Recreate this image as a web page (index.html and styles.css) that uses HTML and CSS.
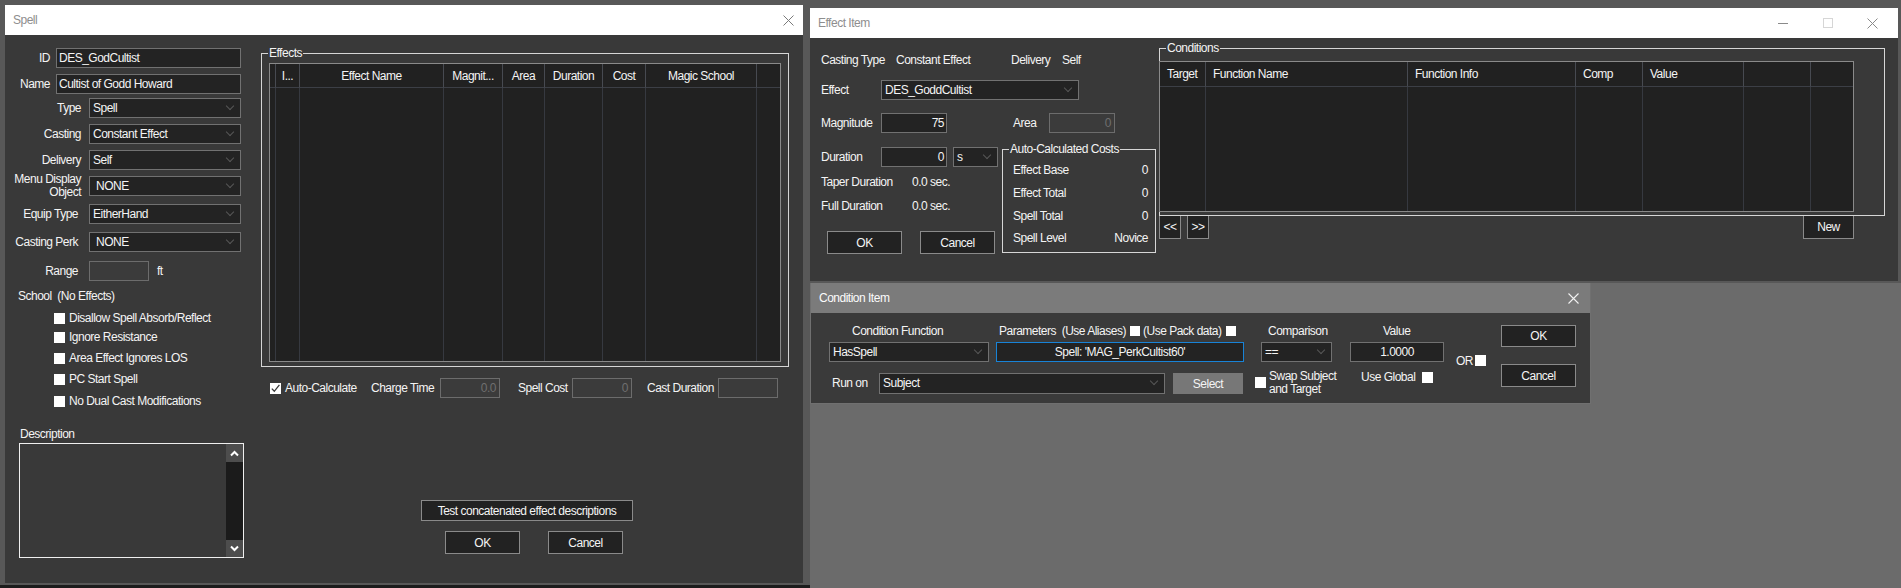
FILE: index.html
```html
<!DOCTYPE html>
<html>
<head>
<meta charset="utf-8">
<title>Spell</title>
<link rel="stylesheet" href="styles.css">
</head>
<body>

<div class="frame frame-spell">
  <div class="win">
    <div class="tbar">
      <span class="ttl">Spell</span>
      <span class="tb tb-spell"><svg width="11" height="11" viewBox="0 0 11 11"><path d="M0.5 0.5L10.5 10.5M10.5 0.5L0.5 10.5" stroke="#7a7a7a" stroke-width="1" fill="none"/></svg></span>
    </div>
    <div class="spell-body">
      <div class="spell-left">
        <div class="frow mt13"><span class="lbl la">ID</span><div class="inp wa">DES_GodCultist</div></div>
        <div class="frow mt6"><span class="lbl la">Name</span><div class="inp wa">Cultist of Godd Howard</div></div>
        <div class="frow mt4"><span class="lbl lb">Type</span><div class="inp dd wb">Spell</div></div>
        <div class="frow mt6"><span class="lbl lb">Casting</span><div class="inp dd wb">Constant Effect</div></div>
        <div class="frow mt6"><span class="lbl lb">Delivery</span><div class="inp dd wb">Self</div></div>
        <div class="frow mt6"><span class="lbl lb two">Menu Display<br>Object</span><div class="inp dd wb pad6">NONE</div></div>
        <div class="frow mt8"><span class="lbl lb lp3">Equip Type</span><div class="inp dd wb">EitherHand</div></div>
        <div class="frow mt8"><span class="lbl lb lp3">Casting Perk</span><div class="inp dd wb pad6">NONE</div></div>
        <div class="frow mt9"><span class="lbl lb lp3">Range</span><div class="inp dis wr"></div><span class="ft">ft</span></div>
        <div class="school">School&nbsp;&nbsp;(No Effects)</div>
        <div class="chk mt6"><span class="cb"></span>Disallow Spell Absorb/Reflect</div>
        <div class="chk mt3"><span class="cb"></span>Ignore Resistance</div>
        <div class="chk mt5"><span class="cb"></span>Area Effect Ignores LOS</div>
        <div class="chk mt5"><span class="cb"></span>PC Start Spell</div>
        <div class="chk mt6"><span class="cb"></span>No Dual Cast Modifications</div>
        <div class="desc-lbl">Description</div>
        <div class="desc">
          <div class="sb">
            <div class="sb-btn sb-up"><svg width="9" height="7" viewBox="0 0 9 7"><polyline points="1,5.5 4.5,2 8,5.5" stroke="#fff" stroke-width="2" fill="none"/></svg></div>
            <div class="sb-track"></div>
            <div class="sb-btn sb-dn"><svg width="9" height="7" viewBox="0 0 9 7"><polyline points="1,1.5 4.5,5 8,1.5" stroke="#fff" stroke-width="2" fill="none"/></svg></div>
          </div>
        </div>
      </div>

      <div class="spell-right">
        <div class="gb gb-eff">
          <span class="gb-t">Effects</span>
          <div class="lv lv-eff">
            <div class="h"></div>
            <div class="h">I...</div>
            <div class="h">Effect Name</div>
            <div class="h">Magnit...</div>
            <div class="h">Area</div>
            <div class="h">Duration</div>
            <div class="h">Cost</div>
            <div class="h">Magic School</div>
            <div class="h last"></div>
            <div class="b"></div><div class="b"></div><div class="b"></div><div class="b"></div><div class="b"></div><div class="b"></div><div class="b"></div><div class="b"></div><div class="b last"></div>
          </div>
        </div>

        <div class="autorow">
          <span class="cb cbk"><svg width="11" height="11" viewBox="0 0 11 11"><polyline points="1.8,5.6 4.3,8.3 9.4,1.8" stroke="#3a3a3a" stroke-width="1.3" fill="none"/></svg></span>
          <span class="a-lbl w86">Auto-Calculate</span>
          <span class="a-lbl w69">Charge Time</span>
          <div class="inp dis w60">0.0</div>
          <span class="a-lbl w54 ml18">Spell Cost</span>
          <div class="inp dis w60">0</div>
          <span class="a-lbl w71 ml15">Cast Duration</span>
          <div class="inp dis w60"></div>
        </div>

        <div class="btn btn-test">Test concatenated effect descriptions</div>
        <div class="btnrow">
          <div class="btn btn-ok1">OK</div>
          <div class="btn btn-cancel1">Cancel</div>
        </div>
      </div>
    </div>
  </div>
</div>

<div class="frame frame-effect">
  <div class="win">
    <div class="tbar tbar-eff">
      <span class="ttl">Effect Item</span>
      <span class="tb"><svg width="10" height="10" viewBox="0 0 10 10"><path d="M0 5.5H10" stroke="#8a8a8a" stroke-width="1"/></svg></span>
      <span class="tb"><svg width="10" height="10" viewBox="0 0 10 10"><rect x="0.5" y="0.5" width="9" height="9" stroke="#d6d6d6" stroke-width="1" fill="none"/></svg></span>
      <span class="tb"><svg width="11" height="11" viewBox="0 0 11 11"><path d="M0.5 0.5L10.5 10.5M10.5 0.5L0.5 10.5" stroke="#8a8a8a" stroke-width="1" fill="none"/></svg></span>
    </div>
    <div class="eff-body">
      <div class="eff-left">
        <div class="e-r1">
          <span class="w75">Casting Type</span>
          <span class="w115">Constant Effect</span>
          <span class="w51">Delivery</span>
          <span>Self</span>
        </div>
        <div class="frow e-r2"><span class="w60">Effect</span><div class="inp dd w198">DES_GoddCultist</div></div>
        <div class="frow e-r3">
          <span class="w60">Magnitude</span><div class="inp num w66">75</div>
          <span class="w36 ml66">Area</span><div class="inp dis w66">0</div>
        </div>
        <div class="e-low">
          <div class="e-sub">
            <div class="frow">
              <span class="w60">Duration</span><div class="inp num w66">0</div>
              <div class="inp dd w45 ml6">s</div>
            </div>
            <div class="srow mt7"><span class="w91">Taper Duration</span><span>0.0 sec.</span></div>
            <div class="srow mt8"><span class="w91">Full Duration</span><span>0.0 sec.</span></div>
            <div class="btnrow mt17">
              <div class="btn btn-ok2">OK</div>
              <div class="btn btn-cancel2">Cancel</div>
            </div>
          </div>
          <div class="gb gb-cost">
            <span class="gb-t">Auto-Calculated Costs</span>
            <div class="crow"><span>Effect Base</span><span>0</span></div>
            <div class="crow mt7"><span>Effect Total</span><span>0</span></div>
            <div class="crow mt7"><span>Spell Total</span><span>0</span></div>
            <div class="crow mt6"><span>Spell Level</span><span>Novice</span></div>
          </div>
        </div>
      </div>

      <div class="cond-panel">
        <div class="gb gb-cond">
          <span class="gb-t">Conditions</span>
          <div class="lv lv-cond">
            <div class="h">Target</div>
            <div class="h">Function Name</div>
            <div class="h">Function Info</div>
            <div class="h">Comp</div>
            <div class="h">Value</div>
            <div class="h"></div>
            <div class="h last"></div>
            <div class="b"></div><div class="b"></div><div class="b"></div><div class="b"></div><div class="b"></div><div class="b"></div><div class="b last"></div>
          </div>
        </div>
        <div class="cbtns">
          <div class="btn btn-sm">&lt;&lt;</div>
          <div class="btn btn-sm ml6">&gt;&gt;</div>
          <div class="btn btn-new">New</div>
        </div>
      </div>
    </div>
  </div>
</div>

<div class="cond">
  <div class="ctbar">
    <span class="ttl ttl-c">Condition Item</span>
    <span class="tb tb-c"><svg width="11" height="11" viewBox="0 0 11 11"><path d="M0.5 0.5L10.5 10.5M10.5 0.5L0.5 10.5" stroke="#f2f2f2" stroke-width="1.1" fill="none"/></svg></span>
  </div>
  <div class="cbody">
    <div class="cmain">
      <div class="ca">
        <span class="w147">Condition Function</span>
        <span class="w128">Parameters&nbsp;&nbsp;(Use Aliases)</span>
        <span class="cb cb10 ml3"></span>
        <span class="w80 ml3">(Use Pack data)</span>
        <span class="cb cb10 ml3"></span>
        <span class="w115 ml32">Comparison</span>
        <span>Value</span>
      </div>
      <div class="frow cbrow">
        <div class="inp dd w160 ml18">HasSpell</div>
        <div class="inp param w248 ml7">Spell: 'MAG_PerkCultist60'</div>
        <div class="inp dd w71 ml17">==</div>
        <div class="inp val w94 ml18">1.0000</div>
        <div class="orgrp"><span class="w19">OR</span><span class="cb"></span></div>
      </div>
      <div class="ccrow">
        <span class="runon">Run on</span>
        <div class="inp dd w286 h21">Subject</div>
        <div class="btn btn-sel">Select</div>
        <span class="cb swapcb"></span>
        <span class="swaptxt">Swap Subject<br>and Target</span>
        <span class="useglobal">Use Global</span>
        <span class="cb globalcb"></span>
      </div>
    </div>
    <div class="cbcol">
      <div class="btn btn-c">OK</div>
      <div class="btn btn-c btn-c2">Cancel</div>
    </div>
  </div>
</div>

</body>
</html>
```
FILE: styles.css
```css
* { box-sizing: border-box; }
html, body { margin: 0; padding: 0; }
body {
  position: relative;
  width: 1901px;
  height: 588px;
  overflow: hidden;
  background: #6b6b6b;
  font-family: "Liberation Sans", Arial, sans-serif;
  font-size: 12px;
  letter-spacing: -0.5px;
  line-height: 16px;
  color: #f4f4f4;
}

/* window frames on the desktop */
.frame { position: absolute; background: #585858; }
.frame-spell {
  left: 0; top: 0; width: 810px; height: 588px;
  padding: 5px 7px 2px 5px;
  border-bottom: 3px solid #1c1c1c;
}
.frame-effect {
  left: 810px; top: 0; width: 1091px; height: 283px;
  padding: 8px 3px 2px 0;
}
.win { display: flex; flex-direction: column; height: 100%; background: #393939; }
.tbar { height: 30px; flex: none; background: #fff; display: flex; align-items: center; padding-left: 8px; }
.ttl { flex: 1; color: #8e8e8e; }
.tb { width: 45px; height: 30px; display: flex; align-items: center; justify-content: center; flex: none; }
.tb-spell { width: 30px; }
.tbar-eff { padding-right: 3px; }

/* generic spacing */
.mt3 { margin-top: 3px; } .mt4 { margin-top: 4px; } .mt5 { margin-top: 5px; }
.mt6 { margin-top: 6px; } .mt7 { margin-top: 7px; } .mt8 { margin-top: 8px; }
.mt9 { margin-top: 9px; } .mt13 { margin-top: 13px; } .mt17 { margin-top: 17px; }
.ml3 { margin-left: 3px; } .ml6 { margin-left: 6px; } .ml7 { margin-left: 7px; }
.ml15 { margin-left: 15px; } .ml17 { margin-left: 17px; } .ml18 { margin-left: 18px; }
.ml32 { margin-left: 32px; } .ml66 { margin-left: 66px; }

/* controls */
.frow { display: flex; align-items: center; height: 20px; flex: none; }
.lbl { flex: none; text-align: right; white-space: nowrap; }
.la { width: 45px; margin-right: 6px; }
.lb { width: 76px; margin-right: 8px; }
.lp3 { padding-right: 3px; }
.two { line-height: 13px; }
.inp {
  position: relative; flex: none;
  height: 20px; line-height: 18px;
  border: 1px solid #717171; background: #232323;
  padding: 0 2px; white-space: nowrap; overflow: hidden;
}
.dd { padding-left: 3px; }
.dd::after {
  content: ""; position: absolute; right: 7px; top: 4px;
  width: 5px; height: 5px;
  border-right: 1px solid #575757; border-bottom: 1px solid #575757;
  transform: rotate(45deg);
}
.pad6 { padding-left: 6px; }
.dis { background: #3b3b3b; border-color: #6c6c6c; color: #6f6f6f; text-align: right; padding-right: 3px; }
.num { text-align: right; padding-right: 2px; }
.wa { width: 185px; } .wb { width: 152px; } .wr { width: 60px; }
.w19 { width: 19px; } .w36 { width: 36px; } .w45 { width: 45px; } .w51 { width: 51px; }
.w54 { width: 54px; } .w60 { width: 60px; } .w66 { width: 66px; } .w69 { width: 69px; }
.w71 { width: 71px; } .w75 { width: 75px; } .w80 { width: 80px; } .w86 { width: 86px; }
.w91 { width: 91px; } .w94 { width: 94px; } .w115 { width: 115px; } .w128 { width: 128px; }
.w147 { width: 147px; } .w160 { width: 160px; } .w198 { width: 198px; } .w248 { width: 248px; }
.w286 { width: 286px; }
.w19, .w36, .w51, .w54, .w60, .w69, .w71, .w75, .w80, .w86, .w91, .w115, .w128, .w147 { flex: none; white-space: nowrap; }
.h21 { height: 21px; line-height: 19px; }
.ft { margin-left: 8px; }

.cb { display: inline-block; flex: none; width: 11px; height: 11px; background: #fff; }
.cb svg { display: block; }
.cb10 { width: 10px; height: 10px; }

.btn {
  flex: none; height: 23px;
  border: 1px solid #8a8a8a; background: #222;
  display: flex; align-items: center; justify-content: center;
  white-space: nowrap;
}

/* Spell window */
.spell-body { flex: 1; display: flex; }
.spell-left { width: 256px; flex: none; display: flex; flex-direction: column; }
.spell-right { flex: 1; display: flex; flex-direction: column; }
.school { margin-top: 7px; height: 16px; padding-left: 13px; }
.chk { display: flex; align-items: center; height: 16px; padding-left: 49px; }
.chk .cb { margin-right: 4px; }
.desc-lbl { margin-top: 17px; height: 16px; padding-left: 15px; }
.desc {
  margin: 1px 0 0 14px; width: 225px; height: 115px;
  border: 1px solid #efefef; display: flex; justify-content: flex-end;
}
.sb { width: 17px; display: flex; flex-direction: column; background: #1b1b1b; }
.sb-btn { background: #4d4d4d; display: flex; align-items: center; justify-content: center; }
.sb-up { height: 18px; }
.sb-dn { height: 17px; }
.sb-track { flex: 1; }

.gb { position: relative; border: 1px solid #d6d6d6; flex: none; }
.gb-t { position: absolute; top: -8px; left: 6px; line-height: 14px; padding: 0 1px; background: #393939; white-space: nowrap; }
.gb-eff { margin-top: 18px; width: 528px; height: 314px; padding: 9px 7px 0 7px; }

.lv { display: grid; border: 1px solid #8a8a8a; background: #212121; }
.lv .h {
  border-right: 1px solid #474a51; border-bottom: 1px solid #3c3f46;
  display: flex; align-items: center; justify-content: center;
  white-space: nowrap; overflow: hidden;
}
.lv .b { border-right: 1px solid #363940; }
.lv .last { border-right: none; }
.lv-eff {
  width: 512px; height: 299px;
  grid-template-columns: 6px 24px 144px 59px 42px 58px 43px 111px 1fr;
  grid-template-rows: 24px 1fr;
}

.autorow { margin-top: 11px; display: flex; align-items: center; height: 20px; padding-left: 9px; }
.cbk { margin-right: 4px; }
.a-lbl { flex: none; white-space: nowrap; }
.autorow .inp { height: 20px; }

.btn-test { margin: 102px 0 0 160px; width: 212px; height: 21px; }
.btnrow { display: flex; }
.spell-right .btnrow { margin-top: 10px; }
.btn-ok1 { margin-left: 184px; width: 75px; }
.btn-cancel1 { margin-left: 28px; width: 75px; }

/* Effect Item window */
.eff-body { flex: 1; display: flex; }
.eff-left { width: 349px; flex: none; padding-left: 11px; display: flex; flex-direction: column; }
.e-r1 { margin-top: 14px; height: 16px; display: flex; align-items: center; }
.e-r2 { margin-top: 12px; }
.e-r3 { margin-top: 13px; }
.e-low { margin-top: 14px; display: flex; align-items: flex-start; }
.e-sub { width: 181px; flex: none; display: flex; flex-direction: column; }
.srow { display: flex; align-items: center; height: 16px; }
.btn-ok2 { margin-left: 6px; width: 75px; }
.btn-cancel2 { margin-left: 18px; width: 75px; }
.gb-cost { margin-top: 2px; width: 154px; height: 104px; padding: 12px 7px 0 10px; }
.crow { display: flex; justify-content: space-between; align-items: center; height: 16px; }

.cond-panel { margin-top: 10px; display: flex; flex-direction: column; }
.gb-cond { width: 726px; height: 168px; padding-top: 12px; }
.lv-cond {
  margin-left: -1px; width: 695px; height: 151px;
  grid-template-columns: 46px 202px 168px 67px 101px 67px 1fr;
  grid-template-rows: 25px 1fr;
}
.lv-cond .h { justify-content: flex-start; padding-left: 7px; }
.cbtns { display: flex; width: 695px; margin-top: -1px; }
.btn-sm { width: 22px; height: 24px; }
.btn-new { margin-left: auto; width: 51px; height: 24px; }

/* Condition Item window */
.cond {
  position: absolute; left: 810px; top: 283px; width: 781px; height: 121px;
  display: flex; flex-direction: column;
  background: #3a3a3a;
  border: 1px solid #707070; border-top: none;
}
.ctbar { height: 30px; flex: none; background: #7b7b7b; display: flex; align-items: center; padding: 0 1px 0 8px; }
.ttl-c { color: #fbfbfb; }
.tb-c { width: 32px; }
.cbody { flex: 1; display: flex; }
.cmain { width: 690px; flex: none; display: flex; flex-direction: column; }
.ca { margin-top: 11px; height: 14px; line-height: 14px; display: flex; align-items: center; padding-left: 41px; }
.cbrow { margin-top: 4px; align-items: flex-start; }
.param { border-color: #1883d7; text-align: center; }
.val { text-align: center; }
.orgrp { display: flex; align-items: center; height: 11px; margin: 13px 0 0 12px; flex: none; }
.ccrow { margin-top: 11px; height: 21px; display: flex; align-items: flex-start; padding-left: 21px; }
.runon { width: 47px; flex: none; line-height: 21px; }
.btn-sel { margin-left: 8px; width: 70px; height: 21px; background: #777; border-color: #777; }
.swapcb { margin: 4px 0 0 12px; }
.swaptxt { margin: -3px 0 0 3px; width: 92px; line-height: 13px; flex: none; white-space: nowrap; }
.useglobal { width: 61px; flex: none; line-height: 13px; margin-top: -2px; white-space: nowrap; }
.globalcb { margin-top: -1px; }
.cbcol { display: flex; flex-direction: column; padding-top: 12px; }
.btn-c { width: 75px; height: 22px; }
.btn-c2 { margin-top: 17px; height: 23px; }
```
